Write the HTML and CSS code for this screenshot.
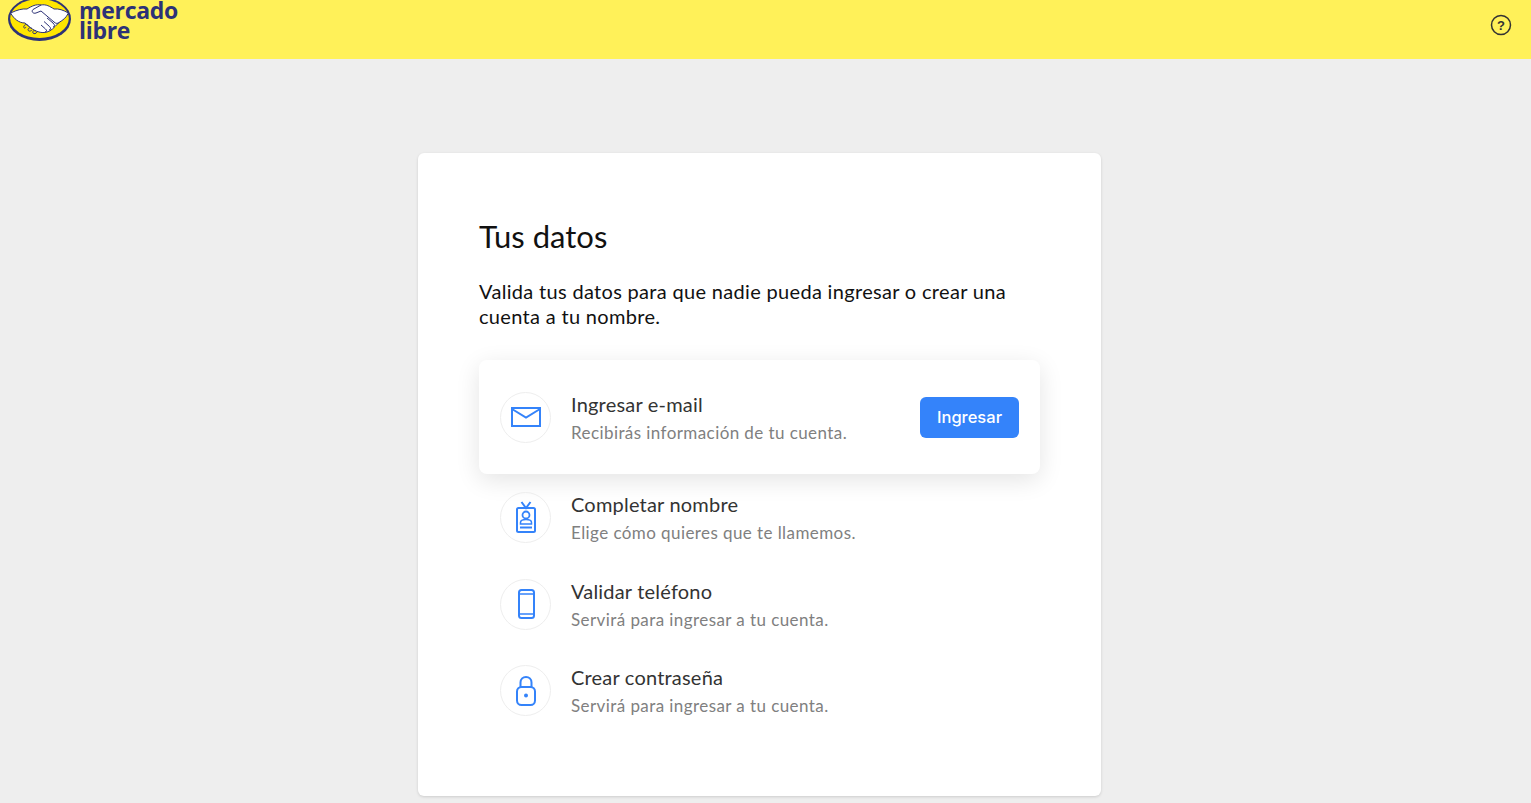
FILE: index.html
```html
<!DOCTYPE html>
<html lang="es">
<head>
    <meta charset="UTF-8">
    <title>Tus datos</title>
    <link rel="stylesheet" href="styles.css">
</head>
<body>
<div class="header">
    <div class="logo">
        <svg class="logo-mark" width="64" height="43" viewBox="0 0 64 43">
            <ellipse cx="31.5" cy="20" rx="31.500" ry="22" fill="#2d3277"/>
            <ellipse cx="31.5" cy="19.500" rx="29.300" ry="19.500" fill="#ffe600"/>
            <path d="M2.600 14C9 11 14 9.500 19 10C24 7 28 5 33 6C38 5 42 7.500 46 10C51 9.500 55 11 60.400 14C58 19 55 21 51 23.500L47 27.500C44 31 40 33.500 36 33.500C31 34 25 31 21 27.500L17 24C11 24 6 20 2.600 14Z" fill="#fff" stroke="#2d3277" stroke-width="1"/>
            <path d="M33 6L25 10.500C23 12.500 25 15 28 14L33 12L46 23C48 25 50 24.500 51 23.500M37 33C39 33 39 31 37.500 30L33 26M41 31C43 31 43 29 41.500 27.500L36 22.500M45 28C47 28 47 26 45 24L39 19M21 27.500C19 25 17 25 16 27C15 29 17 30 18 28M24 29.500C22 28 20 29 20 31C21 33 23 32 24 31M28 32C26 31 24 32 25 34C26 35 28 35 29 33" fill="none" stroke="#2d3277" stroke-width="1"/>
        </svg>
        <div class="logo-text">mercado<br>libre</div>
    </div>
    <svg class="help" width="22" height="22" viewBox="0 0 22 22">
        <circle cx="11" cy="11" r="9.500" fill="none" stroke="#333" stroke-width="1.500"/>
        <text x="11" y="15.500" text-anchor="middle" class="help-mark">?</text>
    </svg>
</div>

<div class="main">
    <div class="card">
        <h1>Tus datos</h1>
        <p class="intro">Valida tus datos para que nadie pueda ingresar o crear una cuenta a tu nombre.</p>

        <div class="step step-active">
            <div class="circle">
                <svg width="30" height="20" viewBox="0 0 30 20">
                    <rect x="1" y="1" width="28" height="18" fill="none" stroke="#3483fa" stroke-width="2"/>
                    <path d="M1 2L15 10.500L29 2" fill="none" stroke="#3483fa" stroke-width="2"/>
                </svg>
            </div>
            <div class="step-text">
                <div class="step-title">Ingresar e-mail</div>
                <div class="step-desc">Recibirás información de tu cuenta.</div>
            </div>
            <a class="btn" href="#">Ingresar</a>
        </div>

        <div class="step">
            <div class="circle">
                <svg width="22" height="32" viewBox="0 0 22 32">
                    <rect x="2" y="7" width="18" height="24" rx="1.500" fill="none" stroke="#3483fa" stroke-width="2"/>
                    <path d="M6.500 1L11 7L15.500 1" fill="none" stroke="#3483fa" stroke-width="2"/>
                    <circle cx="11" cy="14" r="3.500" fill="none" stroke="#3483fa" stroke-width="1.800"/>
                    <path d="M5.500 23V21.500C5.500 19.500 7.500 18.500 11 18.500C14.500 18.500 16.500 19.500 16.500 21.500V23H5.500Z" fill="none" stroke="#3483fa" stroke-width="1.500"/>
                    <path d="M5 26.500H17" stroke="#3483fa" stroke-width="2"/>
                </svg>
            </div>
            <div class="step-text">
                <div class="step-title">Completar nombre</div>
                <div class="step-desc">Elige cómo quieres que te llamemos.</div>
            </div>
        </div>

        <div class="step">
            <div class="circle">
                <svg width="18" height="30" viewBox="0 0 18 30">
                    <rect x="2" y="1" width="15" height="28" rx="2.500" fill="none" stroke="#3483fa" stroke-width="2"/>
                    <path d="M2 5H17M2 25H17" stroke="#3483fa" stroke-width="1.500"/>
                </svg>
            </div>
            <div class="step-text">
                <div class="step-title">Validar teléfono</div>
                <div class="step-desc">Servirá para ingresar a tu cuenta.</div>
            </div>
        </div>

        <div class="step">
            <div class="circle">
                <svg width="20" height="30" viewBox="0 0 20 30">
                    <rect x="1" y="11" width="18" height="18" rx="4.500" fill="none" stroke="#3483fa" stroke-width="2"/>
                    <path d="M4.500 11V6.500C4.500 3 7 1 10 1C13 1 15.500 3 15.500 6.500V11" fill="none" stroke="#3483fa" stroke-width="2"/>
                    <circle cx="10" cy="19.500" r="2" fill="#3483fa"/>
                </svg>
            </div>
            <div class="step-text">
                <div class="step-title">Crear contraseña</div>
                <div class="step-desc">Servirá para ingresar a tu cuenta.</div>
            </div>
        </div>
    </div>
</div>
</body>
</html>
```

FILE: styles.css
```css
* {
    margin: 0;
    padding: 0;
    box-sizing: border-box;
}

html, body {
    height: 100%;
    overflow: hidden;
}

body {
    background-color: #eee;
    font-family: "Lato", "Liberation Sans", sans-serif;
    color: #111;
}

.header {
    height: 59px;
    background-color: #fff159;
    display: flex;
    justify-content: space-between;
    padding: 0 19px 0 8px;
}

.logo {
    display: flex;
    gap: 7px;
    height: 42px;
}

.logo-mark {
    margin-top: -1px;
}

.logo-text {
    font-family: "Open Sans", "Liberation Sans", sans-serif;
    font-size: 23px;
    font-weight: 700;
    line-height: 20px;
    letter-spacing: -0.3px;
    color: #2d3277;
}

.help {
    margin-top: 14px;
}

.help-mark {
    font-family: "Liberation Sans", sans-serif;
    font-size: 13px;
    font-weight: 700;
    fill: #333;
}

.main {
    display: flex;
    justify-content: center;
    padding: 94px 12px 0 0;
}

.card {
    width: 683px;
    height: 643px;
    background-color: #fff;
    border-radius: 6px;
    box-shadow: 0 1px 3px rgba(0, 0, 0, 0.14);
    padding: 65px 61px 0;
}

h1 {
    font-size: 31px;
    font-weight: 400;
    line-height: 36px;
    color: #111;
}

.intro {
    font-size: 20px;
    line-height: 25px;
    letter-spacing: 0.32px;
    margin-top: 25px;
}

.step {
    display: flex;
    align-items: center;
    height: 86.800px;
    padding: 0 21px;
}

.step-active {
    height: 114px;
    margin-top: 31px;
    background-color: #fff;
    border-radius: 8px;
    box-shadow: 0 6px 24px rgba(0, 0, 0, 0.11);
}

.circle {
    width: 51px;
    height: 51px;
    flex-shrink: 0;
    border: 1px solid #eee;
    border-radius: 50%;
    display: flex;
    align-items: center;
    justify-content: center;
}

.step-text {
    flex: 1;
    margin-left: 20px;
}

.step-title {
    font-size: 20px;
    line-height: 26px;
    letter-spacing: 0.2px;
    color: #333;
}

.step-desc {
    font-size: 17px;
    line-height: 22px;
    letter-spacing: 0.42px;
    margin-top: 5px;
    color: #808080;
}

.btn {
    width: 99px;
    height: 41px;
    background-color: #3483fa;
    border-radius: 6px;
    color: #fff;
    font-family: "Inter", "Liberation Sans", sans-serif;
    font-size: 16.500px;
    font-weight: 500;
    line-height: 41px;
    text-align: center;
    text-decoration: none;
}
```
